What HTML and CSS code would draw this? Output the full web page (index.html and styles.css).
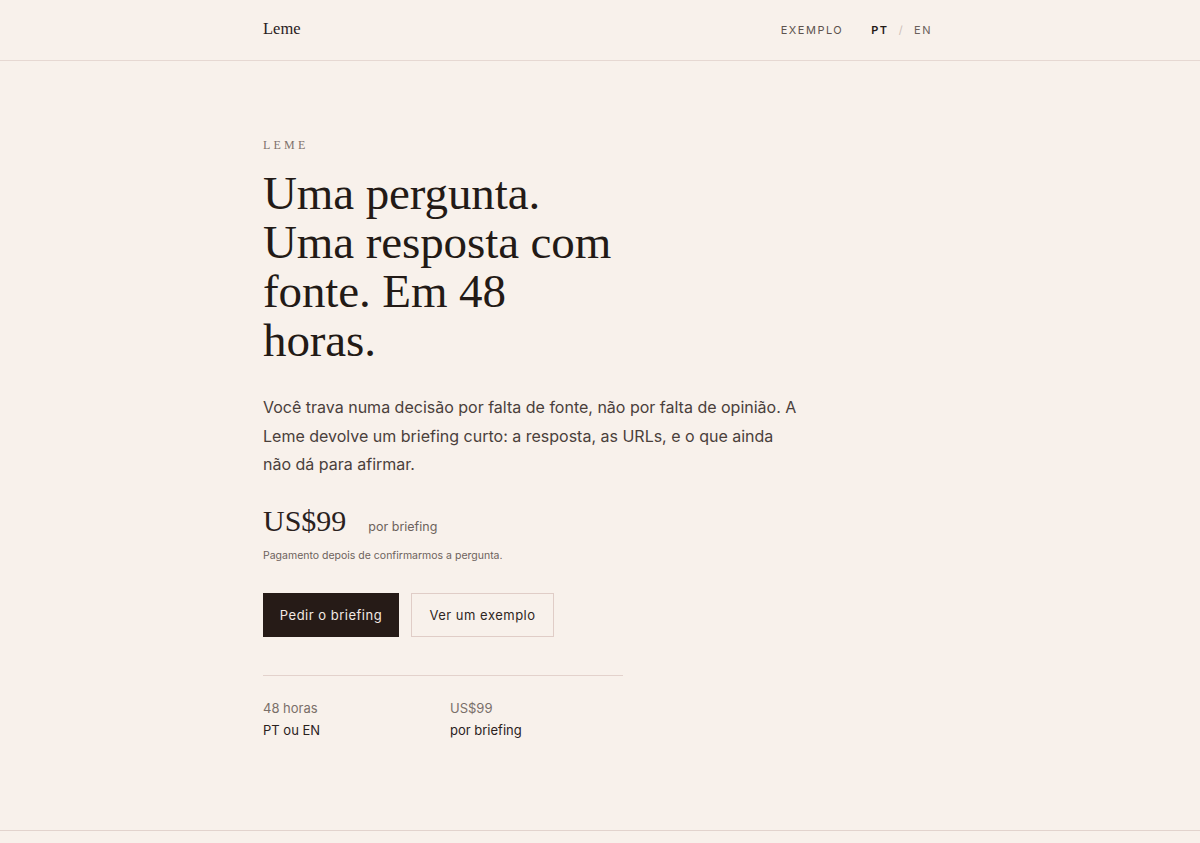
FILE: index.html
```html
<!DOCTYPE html>
<html lang="pt">
<head>
<meta charset="utf-8">
<title>Leme</title>
<link rel="stylesheet" href="styles.css">
</head>
<body>
<header class="site-header">
  <div class="wrap header-inner">
    <a class="logo" href="#">Leme</a>
    <nav class="nav">
      <a class="nav-link" href="#">EXEMPLO</a>
      <span class="lang">
        <a class="lang-active" href="#">PT</a>
        <span class="lang-sep">/</span>
        <a class="lang-link" href="#">EN</a>
      </span>
    </nav>
  </div>
</header>
<main class="hero">
  <div class="wrap">
    <p class="eyebrow">LEME</p>
    <h1 class="title">Uma pergunta.<br>Uma resposta com<br>fonte. Em 48<br>horas.</h1>
    <p class="lead">Você trava numa decisão por falta de fonte, não por falta de opinião. A Leme devolve um briefing curto: a resposta, as URLs, e o que ainda não dá para afirmar.</p>
    <div class="price-row">
      <span class="price">US$99</span>
      <span class="price-unit">por briefing</span>
    </div>
    <p class="note">Pagamento depois de confirmarmos a pergunta.</p>
    <div class="actions">
      <a class="btn btn-primary" href="#">Pedir o briefing</a>
      <a class="btn btn-secondary" href="#">Ver um exemplo</a>
    </div>
    <div class="facts">
      <div class="fact">
        <span class="fact-top">48 horas</span>
        <span class="fact-bottom">PT ou EN</span>
      </div>
      <div class="fact">
        <span class="fact-top">US$99</span>
        <span class="fact-bottom">por briefing</span>
      </div>
    </div>
  </div>
</main>
<footer class="site-footer"></footer>
</body>
</html>
```
FILE: styles.css
```css
* { box-sizing: border-box; }
html, body { margin: 0; padding: 0; }
body {
  background: #f8f1eb;
  color: #231a16;
  font-family: Inter, "Noto Sans", sans-serif;
}
a { text-decoration: none; color: inherit; }
.wrap { width: 674px; margin: 0 auto; }

.site-header { border-bottom: 1px solid #e6d8d2; }
.header-inner {
  height: 60px;
  display: flex;
  align-items: center;
  justify-content: space-between;
}
.logo {
  font-family: "Liberation Serif", serif;
  font-size: 16.5px;
  color: #2a211d;
  margin-top: -3px;
}
.nav {
  display: flex;
  align-items: center;
  gap: 28px;
  font-size: 11px;
  letter-spacing: 1.5px;
  padding-right: 5px;
}
.nav-link { color: #5d534e; }
.lang { display: flex; gap: 10px; align-items: center; }
.lang-active { color: #231a16; font-weight: 600; }
.lang-sep { color: #cdbfb8; }
.lang-link { color: #6a605b; }

.hero { padding-top: 76px; padding-bottom: 90px; border-bottom: 1px solid #e2d3cd; }
.eyebrow {
  margin: 0;
  font-family: "Liberation Serif", serif;
  font-size: 12px;
  letter-spacing: 3.2px;
  color: #7e726b;
  line-height: 16px;
}
.title {
  margin: 16px 0 0;
  font-family: "Liberation Serif", serif;
  font-weight: 400;
  font-size: 47px;
  line-height: 49px;
  color: #231a16;
  letter-spacing: -0.1px;
}
.lead {
  margin: 28px 0 0;
  max-width: 540px;
  font-size: 16px;
  line-height: 28.5px;
  color: #4a403b;
}
.price-row { display: flex; align-items: baseline; gap: 22px; margin-top: 24px; }
.price {
  font-family: "Liberation Serif", serif;
  font-size: 30px;
  line-height: 36px;
  color: #2a211d;
}
.price-unit { font-size: 12.5px; color: #6d625c; }
.note { margin: 10px 0 0; font-size: 10.5px; color: #6d625c; }
.actions { display: flex; gap: 12px; margin-top: 31px; }
.btn {
  height: 44px;
  display: inline-flex;
  align-items: center;
  justify-content: center;
  font-size: 13px;
  letter-spacing: 0.5px;
}
.btn-primary { width: 136px; background: #261b17; color: #f3e9e3; }
.btn-secondary { width: 143px; border: 1px solid #e0cdc7; color: #2f2622; }
.facts {
  width: 360px;
  margin-top: 38px;
  padding-top: 23px;
  border-top: 1px solid #e3d2cc;
  display: grid;
  grid-template-columns: 187px 1fr;
}
.fact { display: flex; flex-direction: column; gap: 3px; font-size: 13px; line-height: 19px; }
.fact-top { color: #7a6f69; }
.fact-bottom { color: #2a211d; }
.site-footer { height: 60px; }
```
